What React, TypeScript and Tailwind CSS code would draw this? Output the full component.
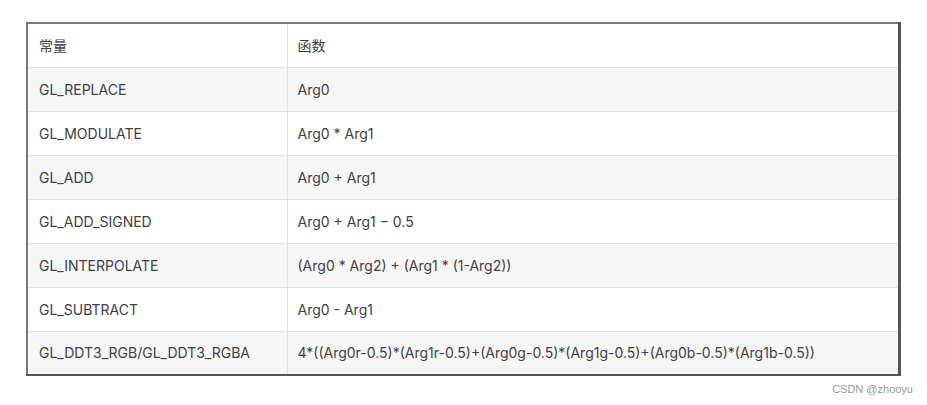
const rows: [string, string][] = [
  ['GL_REPLACE', 'Arg0'],
  ['GL_MODULATE', 'Arg0 * Arg1'],
  ['GL_ADD', 'Arg0 + Arg1'],
  ['GL_ADD_SIGNED', 'Arg0 + Arg1 − 0.5'],
  ['GL_INTERPOLATE', '(Arg0 * Arg2) + (Arg1 * (1-Arg2))'],
  ['GL_SUBTRACT', 'Arg0 - Arg1'],
  [
    'GL_DDT3_RGB/GL_DDT3_RGBA',
    '4*((Arg0r-0.5)*(Arg1r-0.5)+(Arg0g-0.5)*(Arg1g-0.5)+(Arg0b-0.5)*(Arg1b-0.5))',
  ],
]

export default function App() {
  return (
    <div
      className="h-[405px] w-[927px] bg-white pt-[22px] pl-[26px] text-[14px] text-[#404040]"
      style={{ fontFamily: 'Inter, "Noto Sans CJK SC", sans-serif' }}
    >
      <table className="w-[875px] border-collapse border-t-2 border-l-2 border-r-[3px] border-b-2 border-t-[#7a7a7a] border-l-[#7a7a7a] border-r-[#555] border-b-[#555]">
        <thead>
          <tr className="h-[44px] bg-white">
            <th className="w-[260px] border border-[#e2e2e2] px-[11px] text-left font-normal">
              常量
            </th>
            <th className="border border-[#e2e2e2] px-[10px] text-left font-normal">
              函数
            </th>
          </tr>
        </thead>
        <tbody>
          {rows.map(([name, fn], i) => (
            <tr
              key={name}
              className={`h-[44px] ${i % 2 === 0 ? 'bg-[#f6f6f6]' : 'bg-white'}`}
            >
              <td className="border border-[#e2e2e2] px-[11px]">{name}</td>
              <td className="border border-[#e2e2e2] px-[10px]">{fn}</td>
            </tr>
          ))}
        </tbody>
      </table>
      {/* watermark */}
      <div
        className="mt-[5px] w-[887px] text-right text-[11px] text-[#999]"
        style={{ fontFamily: '"Liberation Sans", Arial, sans-serif' }}
      >
        CSDN @zhooyu
      </div>
    </div>
  )
}
